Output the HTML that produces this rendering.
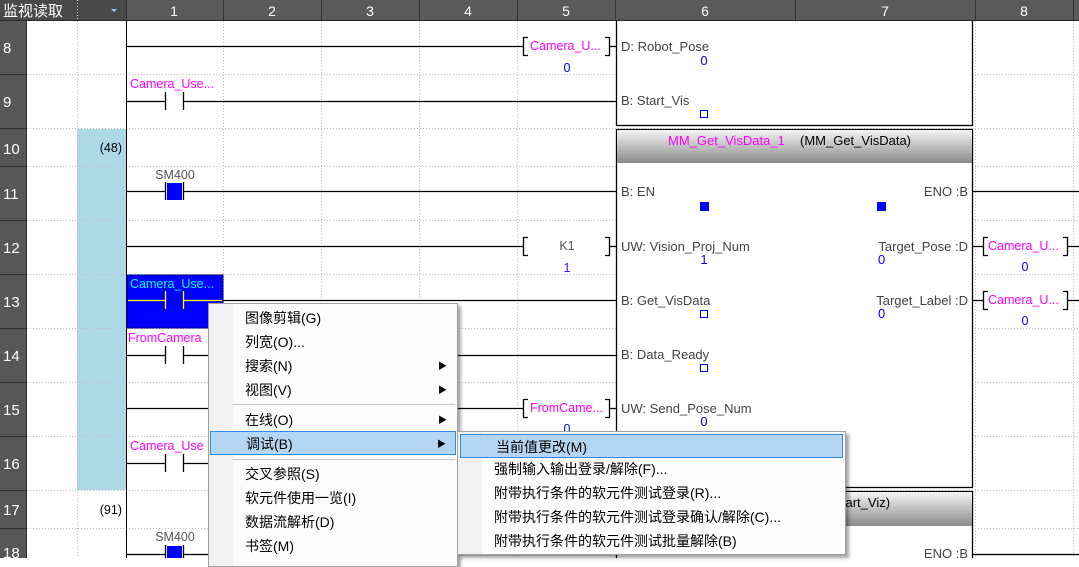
<!DOCTYPE html>
<html><head><meta charset="utf-8">
<style>
html,body{margin:0;padding:0;width:1079px;height:558px;overflow:hidden;background:#fff;}
svg{position:absolute;left:0;top:0;}
.menu{position:absolute;background:#fcfcfc;border:1px solid #a0a0a0;box-shadow:3px 3px 3px rgba(0,0,0,0.35);font-family:"Liberation Sans","Noto Sans CJK SC",sans-serif;font-size:14px;color:#000;}
.gut{position:absolute;left:0;top:0;bottom:0;width:24px;background:#f2f2f2;}
.it{position:absolute;left:0;right:0;height:24px;line-height:24px;}
.it span{position:absolute;left:36px;}
.it b{position:absolute;right:10px;top:0;font-weight:normal;font-size:9px;}
.hl{background:#b5d6f3;border:1px solid #2f8ce0;box-sizing:border-box;}
.sep{position:absolute;left:24px;right:2px;height:1px;background:#c8c8c8;}
</style></head><body>
<svg width="1079" height="558" xmlns="http://www.w3.org/2000/svg" font-family="Liberation Sans, Arial, sans-serif" font-size="12.5">
<defs><linearGradient id="tg" x1="0" y1="0" x2="0" y2="1"><stop offset="0" stop-color="#f4f4f4"/><stop offset="1" stop-color="#8a8a8a"/></linearGradient></defs>
<rect x="77" y="129" width="49" height="361" fill="#add8e6"/>
<g stroke="#bdbdbd" stroke-dasharray="1,2" stroke-width="1">
<line x1="27" y1="74.5" x2="1079" y2="74.5"/>
<line x1="27" y1="128.5" x2="1079" y2="128.5"/>
<line x1="27" y1="166.5" x2="1079" y2="166.5"/>
<line x1="27" y1="220.5" x2="1079" y2="220.5"/>
<line x1="27" y1="274.5" x2="1079" y2="274.5"/>
<line x1="27" y1="328.5" x2="1079" y2="328.5"/>
<line x1="27" y1="382.5" x2="1079" y2="382.5"/>
<line x1="27" y1="436.5" x2="1079" y2="436.5"/>
<line x1="27" y1="490.5" x2="1079" y2="490.5"/>
<line x1="27" y1="528.5" x2="1079" y2="528.5"/>
<line x1="77.5" y1="21" x2="77.5" y2="558"/>
<line x1="223.5" y1="21" x2="223.5" y2="558"/>
<line x1="321.5" y1="21" x2="321.5" y2="558"/>
<line x1="419.5" y1="21" x2="419.5" y2="558"/>
<line x1="517.5" y1="21" x2="517.5" y2="558"/>
<line x1="975.5" y1="21" x2="975.5" y2="558"/>
<line x1="1073.5" y1="21" x2="1073.5" y2="558"/>
</g>
<rect x="616.5" y="15.5" width="356" height="110" fill="#fff" stroke="#000" stroke-width="1.3"/>
<rect x="616.5" y="129.5" width="356" height="358" fill="#fff" stroke="#000" stroke-width="1.3"/>
<rect x="617" y="130" width="355" height="33" fill="url(#tg)"/>
<rect x="616.5" y="491.5" width="356" height="80" fill="#fff" stroke="#000" stroke-width="1.3"/>
<rect x="617" y="492" width="355" height="34" fill="url(#tg)"/>
<rect x="0" y="0" width="1079" height="21" fill="#5a5a5a"/>
<rect x="0" y="0" width="126" height="21" fill="#4a4a4a"/>
<line x1="77.5" y1="0" x2="77.5" y2="21" stroke="#ccc" stroke-dasharray="1,2"/>
<g stroke="#333" stroke-width="1">
<line x1="126.5" y1="0" x2="126.5" y2="21"/><line x1="223.5" y1="0" x2="223.5" y2="21"/><line x1="321.5" y1="0" x2="321.5" y2="21"/><line x1="419.5" y1="0" x2="419.5" y2="21"/><line x1="517.5" y1="0" x2="517.5" y2="21"/><line x1="615.5" y1="0" x2="615.5" y2="21"/><line x1="795.5" y1="0" x2="795.5" y2="21"/><line x1="975.5" y1="0" x2="975.5" y2="21"/><line x1="1073.5" y1="0" x2="1073.5" y2="21"/>
<line x1="0" y1="20.5" x2="1079" y2="20.5" stroke="#2a2a2a"/>
</g>
<text x="3" y="16" fill="#fff" font-size="15" font-family="Noto Sans CJK SC, sans-serif">监视读取</text>
<path d="M111 9 L117 9 L114 12 Z" fill="#9ec5e8"/>
<g fill="#fff" font-size="14" text-anchor="middle">
<text x="174" y="16">1</text><text x="272" y="16">2</text><text x="370" y="16">3</text><text x="468" y="16">4</text><text x="566" y="16">5</text><text x="705" y="16">6</text><text x="885" y="16">7</text><text x="1024" y="16">8</text>
</g>
<g>
<rect x="0" y="21" width="27" height="537" fill="#575757"/>
<g stroke="#2e2e2e"><line x1="0" y1="74.5" x2="27" y2="74.5"/><line x1="0" y1="128.5" x2="27" y2="128.5"/><line x1="0" y1="166.5" x2="27" y2="166.5"/><line x1="0" y1="220.5" x2="27" y2="220.5"/><line x1="0" y1="274.5" x2="27" y2="274.5"/><line x1="0" y1="328.5" x2="27" y2="328.5"/><line x1="0" y1="382.5" x2="27" y2="382.5"/><line x1="0" y1="436.5" x2="27" y2="436.5"/><line x1="0" y1="490.5" x2="27" y2="490.5"/><line x1="0" y1="528.5" x2="27" y2="528.5"/><line x1="26.5" y1="21" x2="26.5" y2="558"/></g>
<g fill="#fff" font-size="15">
<text x="3" y="53">8</text><text x="3" y="107">9</text><text x="3" y="154">10</text><text x="3" y="199">11</text><text x="3" y="253">12</text><text x="3" y="307">13</text><text x="3" y="361">14</text><text x="3" y="415">15</text><text x="3" y="469">16</text><text x="3" y="515">17</text><text x="3" y="558">18</text>
</g>
</g>
<text x="122" y="152" text-anchor="end" fill="#000">(48)</text>
<text x="122" y="514" text-anchor="end" fill="#000">(91)</text>
<line x1="126.5" y1="21" x2="126.5" y2="558" stroke="#000"/>
<g stroke="#000" stroke-width="1.3">
<line x1="126" y1="46.5" x2="523" y2="46.5"/><line x1="610" y1="46.5" x2="616" y2="46.5"/>
<line x1="126" y1="101.5" x2="165" y2="101.5"/><line x1="183" y1="101.5" x2="616" y2="101.5"/>
<line x1="126" y1="191.5" x2="165" y2="191.5"/><line x1="183" y1="191.5" x2="616" y2="191.5"/>
<line x1="126" y1="246.5" x2="523" y2="246.5"/><line x1="610" y1="246.5" x2="616" y2="246.5"/>
<line x1="222" y1="300.5" x2="616" y2="300.5"/>
<line x1="126" y1="355.5" x2="165" y2="355.5"/><line x1="183" y1="355.5" x2="616" y2="355.5"/>
<line x1="126" y1="408.5" x2="523" y2="408.5"/><line x1="610" y1="408.5" x2="616" y2="408.5"/>
<line x1="126" y1="463.5" x2="165" y2="463.5"/><line x1="183" y1="463.5" x2="616" y2="463.5"/>
<line x1="126" y1="554.5" x2="165" y2="554.5"/><line x1="183" y1="554.5" x2="616" y2="554.5"/>
<line x1="972" y1="191.5" x2="1079" y2="191.5"/>
<line x1="972" y1="246.5" x2="983" y2="246.5"/><line x1="1068" y1="246.5" x2="1079" y2="246.5"/>
<line x1="972" y1="300.5" x2="983" y2="300.5"/><line x1="1068" y1="300.5" x2="1079" y2="300.5"/>
<line x1="972" y1="554.5" x2="1079" y2="554.5"/>
<path d="M165.5 92v18M183.5 92v18" fill="none"/>
<path d="M165.5 182v18M183.5 182v18" fill="none"/>
<path d="M165.5 346v18M183.5 346v18" fill="none"/>
<path d="M165.5 454v18M183.5 454v18" fill="none"/>
<path d="M165.5 545v18M183.5 545v18" fill="none"/>
<path d="M528 37.5h-4.5v18h4.5M605 37.5h4.5v18h-4.5" fill="none"/>
<path d="M528 237.5h-4.5v18h4.5M605 237.5h4.5v18h-4.5" fill="none"/>
<path d="M528 399.5h-4.5v18h4.5M605 399.5h4.5v18h-4.5" fill="none"/>
<path d="M988 237.5h-4.5v18h4.5M1063 237.5h4.5v18h-4.5" fill="none"/>
<path d="M988 291.5h-4.5v18h4.5M1063 291.5h4.5v18h-4.5" fill="none"/>
</g>
<rect x="167" y="183" width="15" height="17" fill="#0000ff"/>
<rect x="167" y="546" width="15" height="12" fill="#0000ff"/>
<rect x="127" y="275" width="96" height="53" fill="#0000ff"/>
<path d="M128 300.5h37M183 300.5h39M165.5 291v18M183.5 291v18" stroke="#ffff00" stroke-width="1.3" fill="none"/>
<rect x="127" y="275" width="96" height="53" fill="none" stroke="#000080"/>
<g fill="#ff00ff">
<text x="530" y="50">Camera_U...</text>
<text x="130" y="88">Camera_Use...</text>
<text x="128" y="342">FromCamera</text>
<text x="530" y="412">FromCame...</text>
<text x="130" y="450">Camera_Use</text>
<text x="988" y="250">Camera_U...</text>
<text x="988" y="304">Camera_U...</text>
</g>
<text x="130" y="288" fill="#00ffff">Camera_Use...</text>
<g fill="#555"><text x="175" y="179" text-anchor="middle">SM400</text><text x="175" y="541" text-anchor="middle">SM400</text><text x="567" y="250" text-anchor="middle">K1</text></g>
<g fill="#0000ff">
<text x="567" y="72" text-anchor="middle">0</text>
<text x="567" y="272" text-anchor="middle" fill="#4010ff">1</text>
<text x="567" y="433" text-anchor="middle">0</text>
<text x="1025" y="271" text-anchor="middle">0</text>
<text x="1025" y="325" text-anchor="middle">0</text>
</g>
<g fill="#444" font-size="13">
<text x="621" y="51">D: Robot_Pose</text>
<text x="621" y="105">B: Start_Vis</text>
<text x="621" y="196">B: EN</text>
<text x="968" y="196" text-anchor="end">ENO :B</text>
<text x="621" y="251">UW: Vision_Proj_Num</text>
<text x="968" y="251" text-anchor="end">Target_Pose :D</text>
<text x="621" y="305">B: Get_VisData</text>
<text x="968" y="305" text-anchor="end">Target_Label :D</text>
<text x="621" y="359">B: Data_Ready</text>
<text x="621" y="413">UW: Send_Pose_Num</text>
<text x="968" y="558" text-anchor="end">ENO :B</text>
</g>
<text x="668" y="145" fill="#ff00ff" font-size="13">MM_Get_VisData_1</text>
<text x="800" y="145" fill="#000" font-size="13">(MM_Get_VisData)</text>
<text x="668" y="507" fill="#ff00ff" font-size="13">MM_Start_Viz_1</text>
<text x="800" y="507" fill="#000" font-size="13">(MM_Start_Viz)</text>
<g fill="#0000ff" font-size="13">
<text x="704" y="65" text-anchor="middle">0</text>
<text x="704" y="264" text-anchor="middle">1</text>
<text x="878" y="264">0</text>
<text x="878" y="318">0</text>
<text x="704" y="426" text-anchor="middle">0</text>
</g>
<rect x="700.5" y="110.5" width="7" height="7" fill="none" stroke="#0000ff"/>
<rect x="700" y="202" width="9" height="9" fill="#0000ff"/>
<rect x="877" y="202" width="9" height="9" fill="#0000ff"/>
<rect x="700.5" y="310.5" width="7" height="7" fill="none" stroke="#0000ff"/>
<rect x="700.5" y="364.5" width="7" height="7" fill="none" stroke="#0000ff"/>
</svg>

<div class="menu" style="left:208px;top:303px;width:248px;height:262px;">
<div class="gut"></div>
<div class="it" style="top:2px"><span>图像剪辑(G)</span></div>
<div class="it" style="top:26px"><span>列宽(O)...</span></div>
<div class="it" style="top:50px"><span>搜索(N)</span><b>▶</b></div>
<div class="it" style="top:74px"><span>视图(V)</span><b>▶</b></div>
<div class="sep" style="top:100px"></div>
<div class="it" style="top:104px"><span>在线(O)</span><b>▶</b></div>
<div class="it hl" style="top:127px;left:1px;right:1px;"><span style="left:35px">调试(B)</span><b style="right:9px">▶</b></div>
<div class="sep" style="top:155px"></div>
<div class="it" style="top:158px"><span>交叉参照(S)</span></div>
<div class="it" style="top:182px"><span>软元件使用一览(I)</span></div>
<div class="it" style="top:206px"><span>数据流解析(D)</span></div>
<div class="it" style="top:230px"><span>书签(M)</span></div>
</div>

<div class="menu" style="left:457px;top:431px;width:387px;height:122px;">
<div class="gut"></div>
<div class="it hl" style="top:2px;left:2px;right:2px;"><span style="left:35px">当前值更改(M)</span></div>
<div class="it" style="top:25px"><span>强制输入输出登录/解除(F)...</span></div>
<div class="it" style="top:49px"><span>附带执行条件的软元件测试登录(R)...</span></div>
<div class="it" style="top:73px"><span>附带执行条件的软元件测试登录确认/解除(C)...</span></div>
<div class="it" style="top:97px"><span>附带执行条件的软元件测试批量解除(B)</span></div>
</div>
</body></html>
